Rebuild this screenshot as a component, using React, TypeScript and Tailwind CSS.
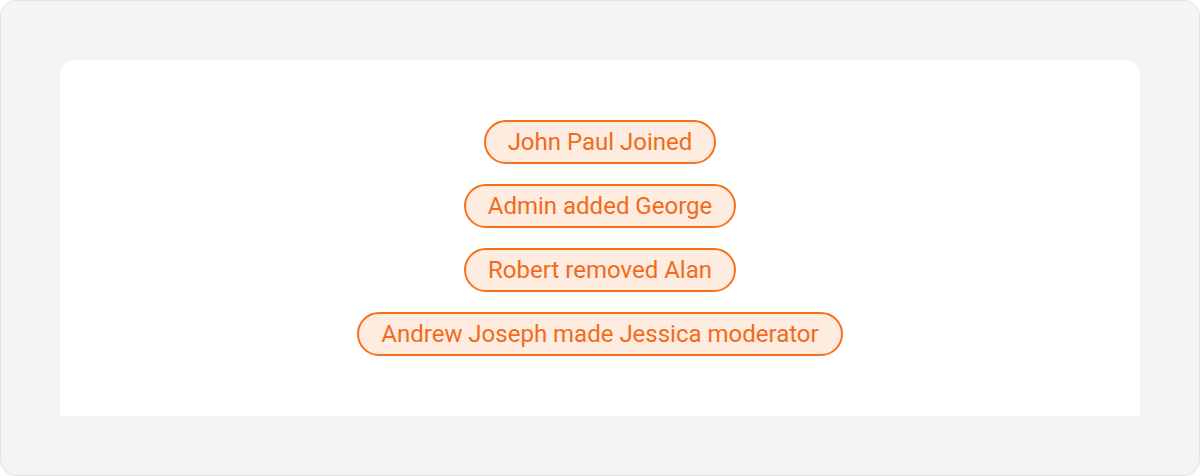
export default function App() {
  const items = [
    "John Paul Joined",
    "Admin added George",
    "Robert removed Alan",
    "Andrew Joseph made Jessica moderator",
  ];
  return (
    <div className="w-[1200px] h-[476px] bg-white" style={{ fontFamily: "Roboto, sans-serif" }}>
      <div className="w-full h-full rounded-[16px] border border-[#e3e3e3] bg-[#f4f4f4] px-[59px] pt-[59px]">
        <div className="bg-white rounded-t-[16px] h-[356px] flex flex-col items-center pt-[60px] gap-[20px]">
          {items.map((t) => (
            <div
              key={t}
              className="h-[44px] px-[22px] rounded-full border-2 border-[#f86f1c] bg-[#fdecdf] text-[#f26a1b] text-[24px] leading-none flex items-center"
            >
              {t}
            </div>
          ))}
        </div>
      </div>
    </div>
  );
}
